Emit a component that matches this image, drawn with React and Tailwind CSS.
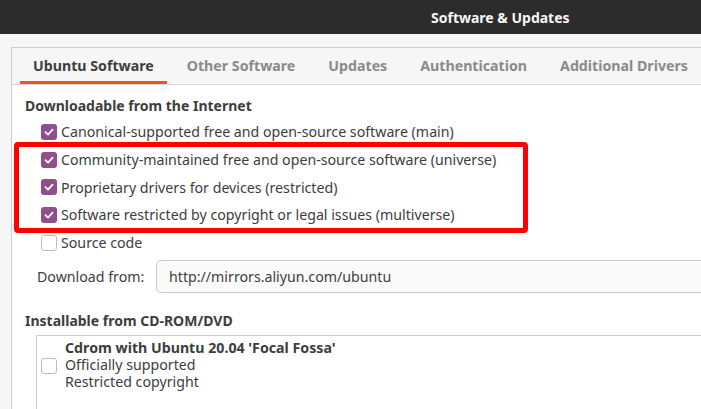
import React from 'react'

const FONT = { fontFamily: '"Noto Sans", "DejaVu Sans", sans-serif' }

const TABS = ['Ubuntu Software', 'Other Software', 'Updates', 'Authentication', 'Additional Drivers']

const SOURCES = [
  { label: 'Canonical-supported free and open-source software (main)', on: true },
  { label: 'Community-maintained free and open-source software (universe)', on: true },
  { label: 'Proprietary drivers for devices (restricted)', on: true },
  { label: 'Software restricted by copyright or legal issues (multiverse)', on: true },
  { label: 'Source code', on: false },
]

function Check({ on }) {
  if (on) {
    return (
      <span className="w-4 h-4 rounded-[3px] bg-[#924d8b] flex items-center justify-center shrink-0">
        <svg width="12" height="12" viewBox="0 0 12 12">
          <polyline points="2.5,6.2 5,8.6 9.6,3.6" fill="none" stroke="#fff" strokeWidth="1.8" strokeLinecap="round" strokeLinejoin="round" />
        </svg>
      </span>
    )
  }
  return <span className="block w-4 h-4 rounded-[3px] bg-white border border-[#bdbdbd] shrink-0" />
}

export default function App() {
  return (
    <div style={FONT} className="relative w-[701px] h-[409px] overflow-hidden bg-[#f6f6f6] text-[#3d3d3d]">
      {/* header bar */}
      <div className="h-[34px] bg-[#2c2c2c] flex items-center pl-[431px]">
        <span className="text-[#f7f7f7] font-bold text-[14px]">Software &amp; Updates</span>
      </div>

      <div className="pl-[11px] pt-[13px]">
        <div className="w-[760px] border-l border-t border-[#cdcdcd]">
          {/* tabs */}
          <div className="h-[37px] flex items-end gap-[7px] pl-[8px] border-b border-[#d6d6d6]">
            {TABS.map((t, i) => (
              <div
                key={t}
                className={`h-full flex items-center px-[13px] text-[14.2px] font-bold whitespace-nowrap ${
                  i === 0 ? 'text-[#3d3d3d] border-b-[3px] border-[#e95420] pt-[3px]' : 'text-[#8a8a8a]'
                }`}
              >
                {t}
              </div>
            ))}
          </div>

          {/* content */}
          <div className="bg-white h-[330px] pl-[13px] pt-[10px]">
            <div className="font-bold text-[14px] h-[21px] leading-[21px]">Downloadable from the Internet</div>
            <div className="pt-[2px] pl-[16px]">
              {SOURCES.map(s => (
                <div key={s.label} className="h-[27.75px] flex items-center gap-[4px] text-[14.2px] whitespace-nowrap">
                  <Check on={s.on} />
                  <span>{s.label}</span>
                </div>
              ))}
            </div>

            <div className="flex items-center mt-[3px] pl-[12px]">
              <span className="text-[14.2px] w-[119px]">Download from:</span>
              <div className="h-[33px] w-[600px] rounded-[5px] border border-[#c8c8c8] bg-[#fafafa] flex items-center pl-[12px] text-[14.2px]">
                http://mirrors.aliyun.com/ubuntu
              </div>
            </div>

            <div className="font-bold text-[14px] mt-[18px] h-[20px] leading-[20px]">Installable from CD-ROM/DVD</div>
            <div className="ml-[11px] mt-[4px] h-[100px] border-l border-t border-[#cdcdcd] flex items-start pt-[3px] pl-[4px]">
              <div className="pt-[19px]">
                <Check on={false} />
              </div>
              <div className="pl-[8px] text-[14.2px] leading-[17px]">
                <div className="font-bold">Cdrom with Ubuntu 20.04 'Focal Fossa'</div>
                <div>Officially supported</div>
                <div>Restricted copyright</div>
              </div>
            </div>
          </div>
        </div>
      </div>

      {/* annotation */}
      <div className="absolute left-[14px] top-[142px] w-[514px] h-[91px] border-[5px] border-[#ff0000] rounded-[4px]" />
    </div>
  )
}
